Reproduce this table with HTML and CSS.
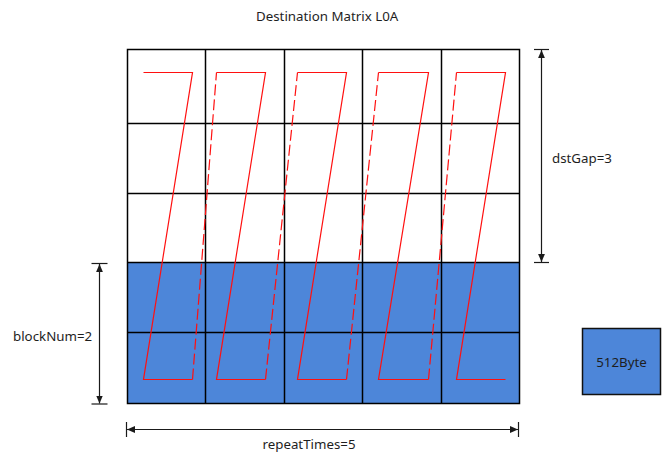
FILE: index.html
```html
<!DOCTYPE html>
<html lang="en">
<head>
<meta charset="utf-8">
<title>Destination Matrix L0A</title>
<link rel="stylesheet" href="styles.css">
</head>
<body>
<svg class="diagram" width="662" height="456" viewBox="0 0 662 456" xmlns="http://www.w3.org/2000/svg">
  <defs>
    <marker id="ah" viewBox="0 0 8 8" refX="8" refY="4" markerWidth="8" markerHeight="8" markerUnits="userSpaceOnUse" orient="auto-start-reverse">
      <path d="M0,0.6 L8,4 L0,7.4 Z" class="arrowhead"/>
    </marker>
  </defs>

  <text class="label" x="256" y="21">Destination Matrix L0A</text>

  <!-- matrix -->
  <rect class="cell-blue" x="127.5" y="262.5" width="392" height="141"/>
  <g class="grid">
    <rect x="127.5" y="49.5" width="392" height="354" fill="none"/>
    <line x1="205.5" y1="49.5" x2="205.5" y2="403.5"/>
    <line x1="284.5" y1="49.5" x2="284.5" y2="403.5"/>
    <line x1="362.5" y1="49.5" x2="362.5" y2="403.5"/>
    <line x1="441.5" y1="49.5" x2="441.5" y2="403.5"/>
    <line x1="127.5" y1="123.5" x2="519.5" y2="123.5"/>
    <line x1="127.5" y1="193.5" x2="519.5" y2="193.5"/>
    <line x1="127.5" y1="262.5" x2="519.5" y2="262.5"/>
    <line x1="127.5" y1="332.5" x2="519.5" y2="332.5"/>
  </g>

  <!-- red traversal path -->
  <g class="trace">
    <polyline points="143.5,72.5 192.5,72.5 143.5,379.5 192.5,379.5"/>
    <polyline points="216.5,72.5 265.5,72.5 216.5,379.5 265.5,379.5"/>
    <polyline points="297.5,72.5 346.5,72.5 297.5,379.5 346.5,379.5"/>
    <polyline points="378.5,72.5 428.5,72.5 378.5,379.5 428.5,379.5"/>
    <polyline points="456.5,72.5 505.5,72.5 456.5,379.5 505.5,379.5"/>
  </g>
  <g class="trace dashed">
    <line x1="192.5" y1="379.5" x2="216.5" y2="72.5"/>
    <line x1="265.5" y1="379.5" x2="297.5" y2="72.5"/>
    <line x1="346.5" y1="379.5" x2="378.5" y2="72.5"/>
    <line x1="428.5" y1="379.5" x2="456.5" y2="72.5"/>
  </g>

  <!-- dstGap dimension -->
  <g class="dim">
    <line x1="534" y1="49.5" x2="549" y2="49.5"/>
    <line x1="534" y1="262.5" x2="549" y2="262.5"/>
    <line x1="541.5" y1="50" x2="541.5" y2="262" marker-start="url(#ah)" marker-end="url(#ah)"/>
  </g>
  <text class="label" x="552" y="162.5">dstGap=3</text>

  <!-- blockNum dimension -->
  <g class="dim">
    <line x1="91.5" y1="263.5" x2="107.5" y2="263.5"/>
    <line x1="91.5" y1="404" x2="107.5" y2="404"/>
    <line x1="99.5" y1="264" x2="99.5" y2="403.5" marker-start="url(#ah)" marker-end="url(#ah)"/>
  </g>
  <text class="label" x="13" y="341">blockNum=2</text>

  <!-- repeatTimes dimension -->
  <g class="dim">
    <line x1="126.5" y1="422" x2="126.5" y2="437"/>
    <line x1="518.5" y1="422" x2="518.5" y2="437"/>
    <line x1="127" y1="429.5" x2="518" y2="429.5" marker-start="url(#ah)" marker-end="url(#ah)"/>
  </g>
  <text class="label" x="262.5" y="448.5">repeatTimes=5</text>

  <!-- legend -->
  <rect class="cell-blue legend" x="582.5" y="328.5" width="78" height="66"/>
  <text class="label centered" x="621.5" y="367">512Byte</text>
</svg>
</body>
</html>
```

FILE: styles.css
```css
html, body {
  margin: 0;
  padding: 0;
  background: #ffffff;
}

.diagram {
  display: block;
}

.label {
  font-family: "Noto Sans", "Open Sans", sans-serif;
  font-size: 13.3px;
  fill: #1e1e1e;
}

.centered {
  text-anchor: middle;
}

.cell-blue {
  fill: #4d86d9;
}

.legend {
  stroke: #111111;
  stroke-width: 1.5;
}

.grid rect,
.grid line {
  stroke: #000000;
  stroke-width: 1.5;
}

.trace polyline,
.trace line {
  fill: none;
  stroke: #ff1010;
  stroke-width: 1.2;
  stroke-linejoin: miter;
}

.trace.dashed line {
  stroke-dasharray: 11 4;
}

.dim line {
  stroke: #1a1a1a;
  stroke-width: 1.2;
}

.arrowhead {
  fill: #1a1a1a;
}
```
